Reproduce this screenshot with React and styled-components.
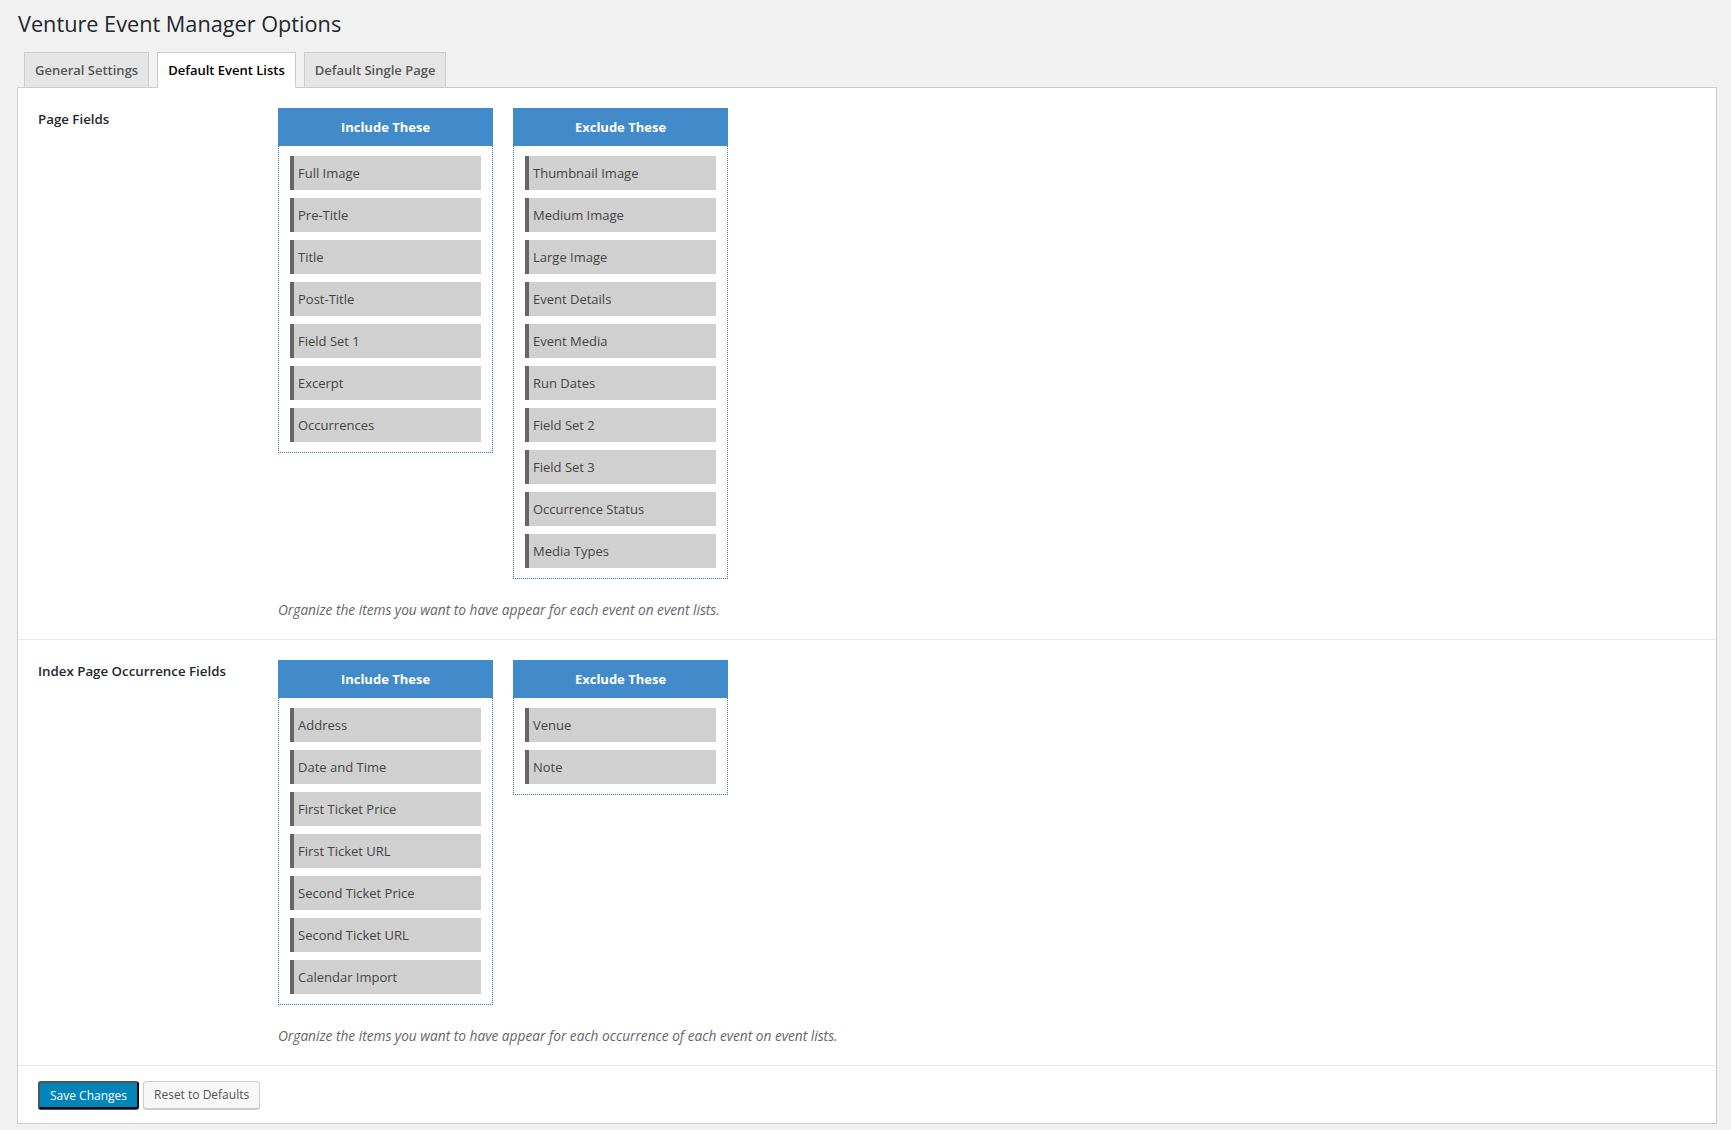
import styled, { createGlobalStyle } from "styled-components";

const GlobalStyle = createGlobalStyle`
  html, body {
    margin: 0;
    padding: 0;
    background: #f1f1f1;
  }
  body {
    font-family: "Open Sans", "Noto Sans", sans-serif;
    color: #23282d;
  }
`;

const Wrap = styled.div`
  padding: 0 14px 7px 17px;
`;

const Title = styled.h1`
  margin: 0 0 13px;
  padding: 9px 0 0 1px;
  font-size: 21.7px;
  font-weight: 400;
  line-height: 30px;
  color: #23282d;
`;

const TabBar = styled.div`
  display: flex;
  gap: 8px;
  padding-left: 7px;
  margin-bottom: -1px;
`;

const Tab = styled.div`
  position: relative;
  z-index: 1;
  height: 34px;
  padding: 0 10px;
  line-height: 34px;
  font-size: 13px;
  font-weight: 600;
  border: 1px solid #ccc;
  border-bottom-color: ${(p) => (p.$active ? "#fff" : "#ccc")};
  background: ${(p) => (p.$active ? "#fff" : "#e5e5e5")};
  color: ${(p) => (p.$active ? "#000" : "#555")};
  cursor: pointer;
`;

const Panel = styled.div`
  background: #fff;
  border: 1px solid #ccc;
`;

const Section = styled.div`
  display: flex;
  align-items: flex-start;
  padding: 20px 20px 19px;
  border-bottom: 1px solid #e8e8e8;
`;

const Label = styled.div`
  width: 240px;
  flex-shrink: 0;
  padding-top: 1px;
  font-size: 13.3px;
  font-weight: 600;
  line-height: 20px;
  color: #23282d;
`;

const Content = styled.div`
  display: flex;
  flex-direction: column;
`;

const Lists = styled.div`
  display: flex;
  align-items: flex-start;
  gap: 20px;
`;

const List = styled.div`
  width: 215px;
`;

const ListHeader = styled.div`
  height: 38px;
  line-height: 38px;
  background: #428bca;
  color: #fff;
  text-align: center;
  font-size: 13px;
  font-weight: 700;
`;

const ListBody = styled.div`
  display: flex;
  flex-direction: column;
  gap: 8px;
  padding: 10px 11px;
  border: 1px dotted #2f7cc0;
  border-top: none;
`;

const Item = styled.div`
  height: 34px;
  line-height: 34px;
  padding-left: 4px;
  background: #d0d0d0;
  border-left: 4px solid #666;
  font-size: 13px;
  color: #444;
  cursor: move;
`;

const Description = styled.p`
  margin: 21px 0 0;
  font-size: 13.7px;
  font-style: italic;
  line-height: 20px;
  color: #666;
`;

const Footer = styled.div`
  display: flex;
  gap: 4px;
  padding: 15px 20px 14px;
`;

const Button = styled.button`
  height: 28px;
  padding: 0 10px;
  font-family: inherit;
  font-size: 12px;
  line-height: 26px;
  border-radius: 3px;
  border: 1px solid ${(p) => (p.$primary ? "#0073aa #006799 #006799" : "#ccc")};
  background: ${(p) => (p.$primary ? "#0085ba" : "#f7f7f7")};
  color: ${(p) => (p.$primary ? "#fff" : "#555")};
  box-shadow: 0 1px 0 ${(p) => (p.$primary ? "#006799" : "#ccc")};
  cursor: pointer;
`;

const FieldList = ({ title, items }) => (
  <List>
    <ListHeader>{title}</ListHeader>
    <ListBody>
      {items.map((item) => (
        <Item key={item}>{item}</Item>
      ))}
    </ListBody>
  </List>
);

const sections = [
  {
    label: "Page Fields",
    include: ["Full Image", "Pre-Title", "Title", "Post-Title", "Field Set 1", "Excerpt", "Occurrences"],
    exclude: [
      "Thumbnail Image",
      "Medium Image",
      "Large Image",
      "Event Details",
      "Event Media",
      "Run Dates",
      "Field Set 2",
      "Field Set 3",
      "Occurrence Status",
      "Media Types",
    ],
    desc: "Organize the items you want to have appear for each event on event lists.",
  },
  {
    label: "Index Page Occurrence Fields",
    include: [
      "Address",
      "Date and Time",
      "First Ticket Price",
      "First Ticket URL",
      "Second Ticket Price",
      "Second Ticket URL",
      "Calendar Import",
    ],
    exclude: ["Venue", "Note"],
    desc: "Organize the items you want to have appear for each occurrence of each event on event lists.",
  },
];

const App = () => {
  return (
    <Wrap>
      <GlobalStyle />
      <Title>Venture Event Manager Options</Title>
      <TabBar>
        <Tab>General Settings</Tab>
        <Tab $active>Default Event Lists</Tab>
        <Tab>Default Single Page</Tab>
      </TabBar>
      <Panel>
        {sections.map((s) => (
          <Section key={s.label}>
            <Label>{s.label}</Label>
            <Content>
              <Lists>
                <FieldList title="Include These" items={s.include} />
                <FieldList title="Exclude These" items={s.exclude} />
              </Lists>
              <Description>{s.desc}</Description>
            </Content>
          </Section>
        ))}
        <Footer>
          <Button $primary>Save Changes</Button>
          <Button>Reset to Defaults</Button>
        </Footer>
      </Panel>
    </Wrap>
  );
};

export default App;
